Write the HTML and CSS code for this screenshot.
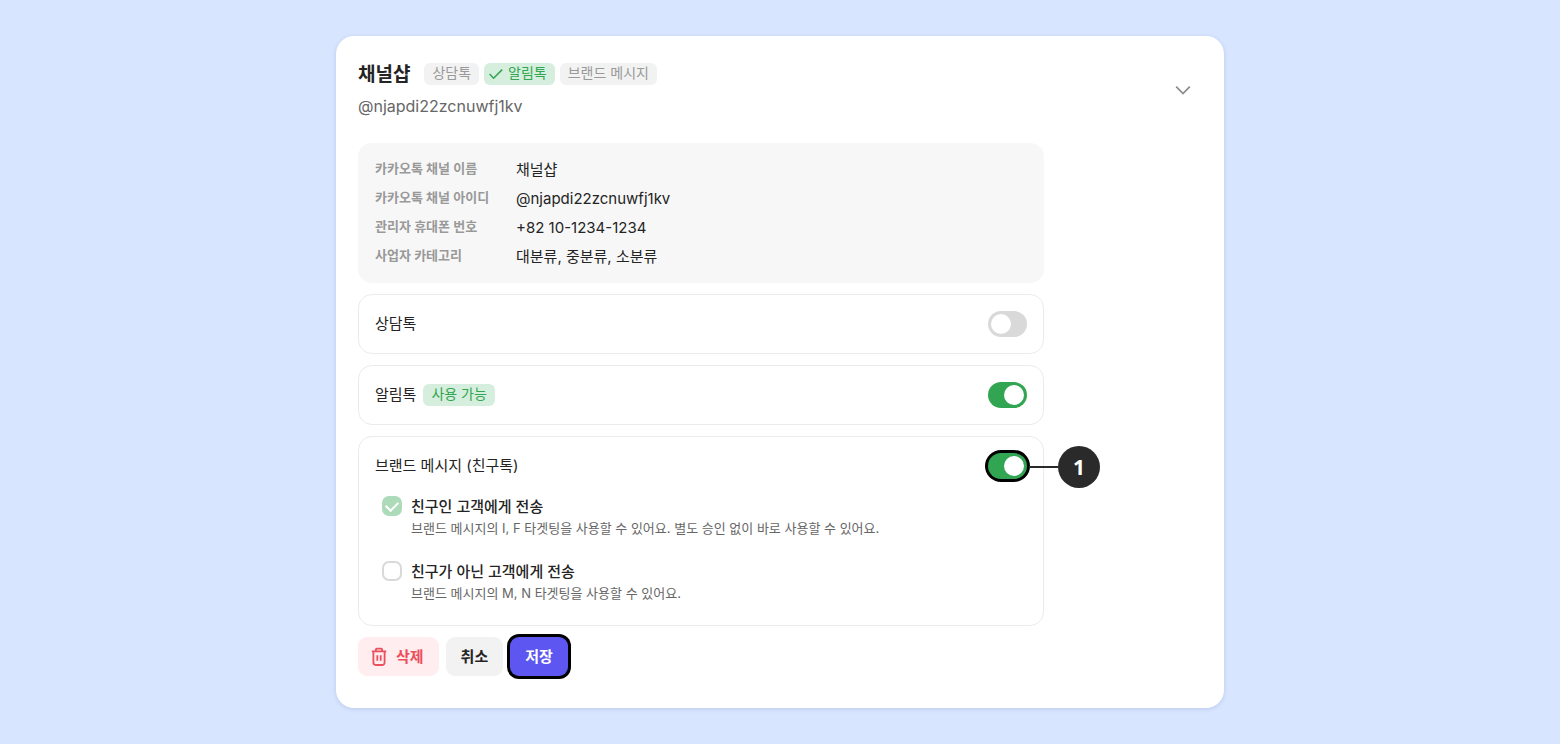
FILE: index.html
```html
<!DOCTYPE html>
<html lang="ko">
<head>
  <meta charset="UTF-8">
  <meta name="viewport" content="width=device-width, initial-scale=1">
  <title>카카오톡 채널 설정</title>
  <link rel="stylesheet" href="styles.css">
</head>
<body>
  <main class="card">
    <header class="card-header">
      <div>
        <div class="title-row">
          <h1>채널샵</h1>
          <div class="tags">
            <span class="tag">상담톡</span>
            <span class="tag green">
              <svg width="14" height="12" viewBox="0 0 14 12" fill="none" stroke="currentColor" stroke-width="1.5"><path d="M.6 6l4 4.2L13.2 1.6"/></svg>
              알림톡
            </span>
            <span class="tag">브랜드 메시지</span>
          </div>
        </div>
        <p class="channel-id">@njapdi22zcnuwfj1kv</p>
      </div>
      <button class="fold-btn" type="button" aria-label="접기">
        <svg width="16" height="10" viewBox="0 0 16 10" fill="none" stroke="currentColor" stroke-width="1.7"><path d="M1.2 1.6L8 8.6l6.8-7"/></svg>
      </button>
    </header>

    <form class="content">
      <dl class="info">
        <dt>카카오톡 채널 이름</dt>
        <dd>채널샵</dd>
        <dt>카카오톡 채널 아이디</dt>
        <dd>@njapdi22zcnuwfj1kv</dd>
        <dt>관리자 휴대폰 번호</dt>
        <dd>+82 10-1234-1234</dd>
        <dt>사업자 카테고리</dt>
        <dd>대분류, 중분류, 소분류</dd>
      </dl>

      <section class="panel">
        <div class="panel-row">
          <label for="consult">상담톡</label>
          <input type="checkbox" role="switch" class="toggle" id="consult">
        </div>
      </section>

      <section class="panel">
        <div class="panel-row">
          <div class="panel-name">
            <label for="alim">알림톡</label>
            <span class="tag green">사용 가능</span>
          </div>
          <input type="checkbox" role="switch" class="toggle" id="alim" checked>
        </div>
      </section>

      <section class="panel">
        <div class="panel-row">
          <label for="brand">브랜드 메시지 (친구톡)</label>
          <div class="marked">
            <input type="checkbox" role="switch" class="toggle ring" id="brand" checked>
            <span class="marker">1</span>
          </div>
        </div>
        <div class="options">
          <div class="option">
            <input type="checkbox" class="check" id="friend" checked disabled>
            <div>
              <label for="friend">친구인 고객에게 전송</label>
              <p>브랜드 메시지의 I, F 타겟팅을 사용할 수 있어요. 별도 승인 없이 바로 사용할 수 있어요.</p>
            </div>
          </div>
          <div class="option">
            <input type="checkbox" class="check" id="notFriend">
            <div>
              <label for="notFriend">친구가 아닌 고객에게 전송</label>
              <p>브랜드 메시지의 M, N 타겟팅을 사용할 수 있어요.</p>
            </div>
          </div>
        </div>
      </section>

      <div class="actions">
        <button type="button" class="btn delete">
          <svg width="16" height="20" viewBox="0 0 16 20" fill="none" stroke="currentColor" stroke-width="1.8"><path d="M.8 4.4h14.4M4.9 4.4V2.6a1 1 0 0 1 1-1h4.2a1 1 0 0 1 1 1v1.8M2.4 4.4v11.2a2.4 2.4 0 0 0 2.4 2.4h6.4a2.4 2.4 0 0 0 2.4-2.4V4.4M6.3 8.2v5.6M9.7 8.2v5.6"/></svg>
          삭제
        </button>
        <button type="button" class="btn">취소</button>
        <button type="button" class="btn save ring">저장</button>
      </div>
    </form>
  </main>
</body>
</html>
```
FILE: styles.css
```css
* {
  box-sizing: border-box;
}
body {
  margin: 0;
  padding: 36px 16px;
  background-color: #d8e5ff;
  color: #242424;
  font-family: Inter, "Noto Sans CJK KR", sans-serif;
  font-size: 15px;
  line-height: 22px;
}
h1, p, dl, dd {
  margin: 0;
}
.card {
  max-width: 888px;
  margin: 0 auto;
  padding: 27px 22px 32px;
  background-color: #fff;
  border-radius: 18px;
  box-shadow: 0 1px 4px rgba(60, 90, 150, 0.2);
}
.card-header {
  display: flex;
  justify-content: space-between;
  align-items: center;
  margin-bottom: 26px;
}
.title-row {
  display: flex;
  align-items: center;
  gap: 14px;
  margin-bottom: 10px;
}
h1 {
  font-size: 19px;
  font-weight: 700;
  line-height: 24px;
  margin-bottom: -2px;
}
.tags {
  display: flex;
  gap: 5px;
}
.tag {
  display: flex;
  align-items: center;
  gap: 5px;
  height: 22px;
  padding: 0 8px 2px;
  border-radius: 6px;
  background-color: #f2f2f2;
  color: #999;
  font-size: 14px;
  line-height: 20px;
}
.tag.green {
  background-color: #d6eedd;
  color: #32a552;
}
.tags .green {
  padding-left: 5px;
}
.tag svg {
  margin-top: 2px;
}
.channel-id {
  color: #666;
  font-size: 16px;
}
.fold-btn {
  display: flex;
  margin-right: 11px;
  padding: 0;
  border: none;
  background: none;
  color: #8c8c8c;
  cursor: pointer;
}
.content {
  display: flex;
  flex-direction: column;
  gap: 11px;
  max-width: 686px;
}
.info {
  display: grid;
  grid-template-columns: 141px 1fr;
  padding: 12px 17px;
  border-radius: 14px;
  background-color: #f7f7f7;
  line-height: 29px;
}
.info dt {
  color: #999;
  font-size: 13px;
  font-weight: 600;
  line-height: 27px;
}
.panel {
  padding: 16px;
  border: 1px solid #ebebeb;
  border-radius: 14px;
}
.panel-row {
  display: flex;
  justify-content: space-between;
  align-items: center;
}
.panel-name {
  display: flex;
  align-items: center;
  gap: 7px;
}
.toggle {
  appearance: none;
  display: block;
  width: 39px;
  height: 26px;
  margin: 0;
  padding: 3px;
  border-radius: 13px;
  background-color: #d9d9d9;
  cursor: pointer;
}
.toggle::before {
  content: "";
  display: block;
  width: 20px;
  height: 20px;
  border-radius: 50%;
  background-color: #fff;
}
.toggle:checked {
  background-color: #32a552;
}
.toggle:checked::before {
  margin-left: auto;
}
.ring {
  box-shadow: 0 0 0 3px #000;
}
.marked {
  position: relative;
}
/* 번호 표시와 연결선 */
.marker {
  position: absolute;
  top: -7px;
  left: 70px;
  width: 42px;
  height: 42px;
  border-radius: 50%;
  background-color: #2a2a2a;
  color: #fff;
  font-family: "Noto Sans", sans-serif;
  font-size: 21px;
  font-weight: 700;
  line-height: 42px;
  text-align: center;
}
.marker::before {
  content: "";
  position: absolute;
  top: 20px;
  right: 100%;
  width: 29px;
  height: 2px;
  background-color: #2a2a2a;
}
.options {
  display: flex;
  flex-direction: column;
  gap: 23px;
  margin: 17px 7px 6px;
}
.option {
  display: flex;
  align-items: flex-start;
  gap: 9px;
}
.option label {
  display: block;
  font-weight: 500;
}
.option p {
  color: #666;
  font-size: 13px;
  line-height: 20px;
}
.check {
  appearance: none;
  display: grid;
  place-items: center;
  flex: none;
  width: 20px;
  height: 20px;
  margin: 0;
  border: 2px solid #d9d9d9;
  border-radius: 7px;
}
.check:checked {
  border-color: #addbba;
  background-color: #addbba;
}
.check:checked::before {
  content: "";
  width: 10px;
  height: 6px;
  margin-bottom: 3px;
  border: solid #fff;
  border-width: 0 0 2px 2px;
  transform: rotate(-45deg);
}
.actions {
  display: flex;
  gap: 7px;
}
.btn {
  display: flex;
  align-items: center;
  gap: 9px;
  height: 39px;
  padding: 0 15px;
  border: none;
  border-radius: 9px;
  background-color: #f2f2f2;
  color: #242424;
  font-family: inherit;
  font-size: 15px;
  font-weight: 700;
  line-height: 22px;
  cursor: pointer;
}
.btn.delete {
  padding-left: 13px;
  background-color: #ffedef;
  color: #eb4e5c;
}
.btn.save {
  background-color: #5e56f0;
  color: #fff;
}
```
